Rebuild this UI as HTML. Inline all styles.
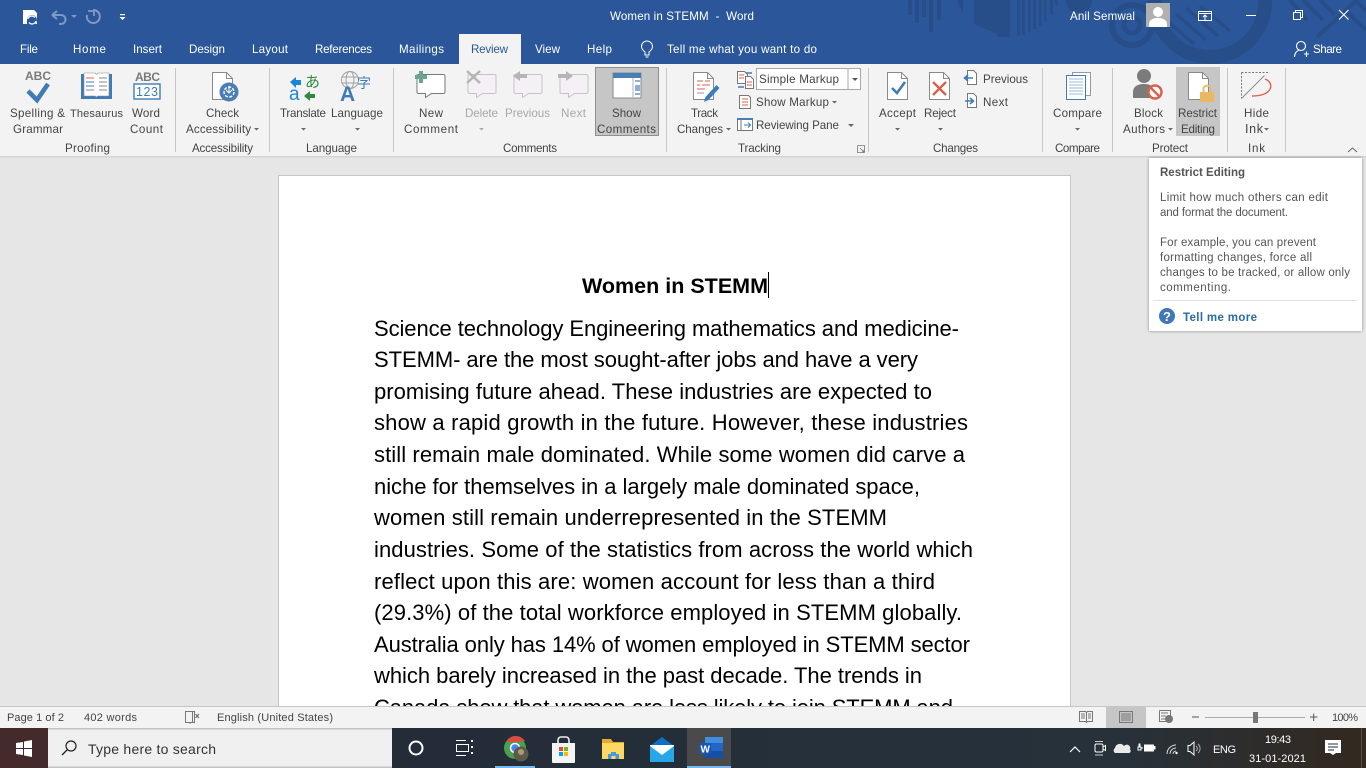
<!DOCTYPE html>
<html><head><meta charset="utf-8"><title>Women in STEMM - Word</title>
<style>
html,body{margin:0;padding:0;width:1366px;height:768px;overflow:hidden;background:#e6e6e6}
svg{display:block}
text{font-family:"Liberation Sans",sans-serif;font-size:11.6px;fill:#444}
.t{fill:#fff}
.d{fill:#a8a8a8}
.b{font-size:22px;fill:#000}
.s{font-size:11px;fill:#444}
.tip{font-size:11.500px;fill:#555}
</style></head><body>
<svg width="1366" height="768" viewBox="0 0 1366 768" xmlns="http://www.w3.org/2000/svg">
<defs>
<linearGradient id="tb" x1="0" x2="1" y1="0" y2="0"><stop offset="0" stop-color="#452a2b"/><stop offset=".05" stop-color="#3c2a2e"/><stop offset=".3" stop-color="#232c38"/><stop offset=".62" stop-color="#25303a"/><stop offset=".82" stop-color="#27313a"/><stop offset="1" stop-color="#33291f"/></linearGradient>
<clipPath id="hd"><rect x="0" y="0" width="1366" height="64"/></clipPath>
<clipPath id="bd"><rect x="279" y="176" width="791" height="530"/></clipPath>
<filter id="sh" x="-10%" y="-10%" width="120%" height="120%"><feDropShadow dx="0" dy="0" stdDeviation="1.6" flood-color="#000" flood-opacity=".4"/></filter>
</defs>
<rect width="1366" height="768" fill="#e6e6e6"/>
<!-- title bar -->
<rect width="1366" height="64" fill="#2b579a"/>
<g clip-path="url(#hd)" fill="#284e8a">
<rect x="908" y="0" width="4" height="15"/><rect x="915" y="0" width="4" height="23"/><rect x="922" y="0" width="4" height="17"/><rect x="929" y="0" width="4" height="32"/><rect x="937" y="0" width="4" height="20"/>
<path d="M957 0h6v15z"/><path d="M974 0h23v34l-23-10z"/><rect x="997" y="0" width="13" height="37"/>
<rect x="1017" y="0" width="3" height="36"/><rect x="1022" y="0" width="3" height="35"/><rect x="1028" y="0" width="2.500" height="32"/><rect x="1033" y="0" width="3" height="29"/><rect x="1039" y="0" width="2.500" height="26"/><rect x="1044" y="0" width="2.500" height="22"/><rect x="1050" y="0" width="3" height="14"/><rect x="1055" y="0" width="3" height="5"/>
<circle cx="1079" cy="0" r="13.500"/>
<circle cx="1132" cy="25" r="20" fill="none" stroke="#284e8a" stroke-width="6"/><circle cx="1132" cy="25" r="8" fill="none" stroke="#284e8a" stroke-width="5"/>
<circle cx="1210" cy="2" r="55" fill="none" stroke="#284e8a" stroke-width="14"/>
<path d="M1166 20l28 24M1176 14l30 26M1186 8l32 28M1200 6l30 25" stroke="#284e8a" stroke-width="3.500" fill="none"/>
<path d="M1290 0l17 20M1303 0l20 20M1320 0l15 15M1345 10l21 20M1355 0l11 11M1357 0l-40 37" stroke="#284e8a" stroke-width="4" fill="none"/>
</g>
<!-- QAT -->
<path d="M23 10h11l3 3v11h-7v-5h-3v5h-4z" fill="#fff"/><circle cx="32" cy="20" r="5" fill="#2b579a"/><path d="M28 19a4 4 0 0 1 7-1.500M36 21a4 4 0 0 1-7 1.500" fill="none" stroke="#fff" stroke-width="1.200"/>
<path d="M52 15l5-4M52 15l5 4M52 15h9a4 4 0 0 1 0 9h-2" fill="none" stroke="#7f9ac4" stroke-width="2"/><path d="M71 15h6l-3 3z" fill="#7f9ac4"/>
<path d="M93 10a6.500 6.500 0 1 1-6 5" fill="none" stroke="#7f9ac4" stroke-width="2"/><path d="M88 11h6v5" fill="none" stroke="#7f9ac4" stroke-width="1.800"/>
<rect x="120" y="14" width="5" height="1.200" fill="#fff"/><path d="M119.500 17h6l-3 3z" fill="#fff"/>
<text class="t" x="610" y="20" textLength="144" lengthAdjust="spacing" xml:space="preserve">Women in STEMM  -  Word</text>
<text class="t" x="1070" y="20" textLength="65" lengthAdjust="spacing">Anil Semwal</text>
<rect x="1146" y="3" width="24" height="24" fill="#b0b0b0"/><circle cx="1158" cy="12" r="5" fill="#fff"/><path d="M1149 27v-3c0-4 4-6 9-6s9 2 9 6v3z" fill="#fff"/>
<path d="M1198.500 11.500h13v9h-13zM1198.500 13.500h13M1205 20v-5M1203 17l2-2 2 2" fill="none" stroke="#fff"/>
<rect x="1246" y="15" width="10" height="1" fill="#fff"/>
<path d="M1293.500 12.500h7v7h-7zM1295.500 12.500v-2h7v7h-2" fill="none" stroke="#fff"/>
<path d="M1339 10l9.500 9.500M1348.500 10l-9.500 9.500" stroke="#fff" fill="none" stroke-width="1.100"/>
<!-- tabs -->
<rect x="459" y="34" width="62" height="30" fill="#f3f3f3"/>
<g class="tabs">
<text class="t" x="20" y="53" textLength="18" lengthAdjust="spacing">File</text>
<text class="t" x="73" y="53" textLength="33" lengthAdjust="spacing">Home</text>
<text class="t" x="133" y="53" textLength="29" lengthAdjust="spacing">Insert</text>
<text class="t" x="189" y="53" textLength="36" lengthAdjust="spacing">Design</text>
<text class="t" x="252" y="53" textLength="36" lengthAdjust="spacing">Layout</text>
<text class="t" x="315" y="53" textLength="57" lengthAdjust="spacing">References</text>
<text class="t" x="399" y="53" textLength="45" lengthAdjust="spacing">Mailings</text>
<text x="471" y="53" textLength="37" lengthAdjust="spacing" style="fill:#2b579a">Review</text>
<text class="t" x="535" y="53" textLength="25" lengthAdjust="spacing">View</text>
<text class="t" x="587" y="53" textLength="25" lengthAdjust="spacing">Help</text>
<text class="t" x="667" y="53" textLength="150" lengthAdjust="spacing">Tell me what you want to do</text>
<text class="t" x="1313" y="53" textLength="29" lengthAdjust="spacing">Share</text>
</g>
<path d="M645 55v-3c-2-1.500-3.500-3-3.500-5.500a5.500 5.500 0 0 1 11 0c0 2.500-1.500 4-3.500 5.500v3zM645.500 57h3" fill="none" stroke="#fff" stroke-width="1"/>
<circle cx="1301" cy="46" r="4.500" fill="none" stroke="#fff" stroke-width="1.100"/><path d="M1294.500 57c0-4 2.500-6.500 5-7M1304 54h5M1306.500 51.500v5.500" fill="none" stroke="#fff" stroke-width="1.100"/>
<!-- ribbon -->
<rect y="64" width="1366" height="92" fill="#f3f3f3"/>
<rect y="156" width="1366" height="1.500" fill="#d4d4d4"/>
<g fill="#c6c6c6">
<rect x="175" y="68" width="1" height="84"/><rect x="269" y="68" width="1" height="84"/><rect x="393" y="68" width="1" height="84"/><rect x="666" y="68" width="1" height="84"/><rect x="868" y="68" width="1" height="84"/><rect x="1042" y="68" width="1" height="84"/><rect x="1112" y="68" width="1" height="84"/><rect x="1227" y="68" width="1" height="84"/><rect x="1285" y="68" width="1" height="84"/>
</g>
<rect x="595.500" y="67.500" width="63" height="68" fill="#c6c6c6" stroke="#8f8f8f"/>
<rect x="1176" y="67" width="44" height="69" fill="#c6c6c6"/>
<!-- Proofing -->
<text x="25" y="80" textLength="26" lengthAdjust="spacing" style="font-weight:bold;font-size:12px;fill:#7a7a7a">ABC</text>
<path d="M28 91l9 9 11-16" fill="none" stroke="#3e7cb8" stroke-width="4.600"/>
<rect x="81" y="74" width="31" height="25" fill="#3e7cb8"/><path d="M84 73h11l1.500 1.500 1.500-1.500h11v23h-11l-1.500 1-1.500-1h-11z" fill="#fff" stroke="#8a8a8a" stroke-width=".6"/>
<path d="M86 78h8" stroke="#d9614c"/><path d="M86 82h8M86 86h8" stroke="#3e7cb8"/><path d="M86 90h8" stroke="#888"/>
<path d="M99 78h8M99 82h8M99 86h8M99 90h8" stroke="#888"/>
<text x="135" y="81" textLength="25" lengthAdjust="spacing" style="font-weight:bold;font-size:12px;fill:#7a7a7a">ABC</text>
<rect x="134" y="84" width="26" height="15" fill="#fff" stroke="#3e7cb8" stroke-width="1.400"/>
<text x="136" y="96" textLength="22" lengthAdjust="spacing" style="font-size:12.500px;fill:#3e7cb8">123</text>
<text x="10" y="117" textLength="55" lengthAdjust="spacing">Spelling &amp;</text>
<text x="13" y="133" textLength="50" lengthAdjust="spacing">Grammar</text>
<text x="70" y="117" textLength="53" lengthAdjust="spacing" style="font-size:11px">Thesaurus</text>
<text x="132" y="117" textLength="28" lengthAdjust="spacing">Word</text>
<text x="130" y="133" textLength="33" lengthAdjust="spacing">Count</text>
<text x="65" y="152" textLength="45" lengthAdjust="spacing">Proofing</text>
<!-- Accessibility -->
<path d="M212.500 72.500h14l6 6v21h-20z" fill="#fff" stroke="#8a8a8a"/><path d="M226.500 72.500v6h6" fill="none" stroke="#8a8a8a"/>
<circle cx="229" cy="92" r="9.500" fill="#4a7fb5"/><circle cx="229" cy="92" r="5" fill="none" stroke="#fff" stroke-dasharray="3 1.500" stroke-width="1.400"/><path d="M229 86v6M226 90l3 3 3-3" stroke="#fff" fill="none"/>
<text x="206" y="117" textLength="33" lengthAdjust="spacing">Check</text>
<text x="186" y="133" textLength="65" lengthAdjust="spacing">Accessibility</text>
<path d="M254 128h5l-2.500 2.500z" fill="#666"/>
<text x="192" y="152" textLength="61" lengthAdjust="spacing">Accessibility</text>
<!-- Language -->
<path d="M290 82l6-5v3h5v5h-5v3z" fill="#1a86d8"/>
<text x="305" y="87" style="font-size:15px;fill:#2d8a3e;font-family:'Noto Sans CJK JP',sans-serif">あ</text>
<text x="289" y="100" style="font-size:19px;fill:#1a86d8">a</text>
<path d="M304 96l6-5v3h5v4h-5v3z" fill="#2d8a3e"/>
<circle cx="350" cy="80" r="8.500" fill="none" stroke="#a0a0a0"/><ellipse cx="350" cy="80" rx="4" ry="8.500" fill="none" stroke="#a0a0a0"/><path d="M342 77h16M342 83h16" stroke="#a0a0a0"/>
<text x="340" y="101" style="font-size:21px;font-weight:bold;fill:#3e7cb8">A</text>
<text x="357" y="88" style="font-size:14px;fill:#3e7cb8;font-family:'Noto Sans CJK JP',sans-serif">字</text>
<text x="280" y="117" textLength="46" lengthAdjust="spacing">Translate</text>
<path d="M301 128h5l-2.500 2.500z" fill="#666"/>
<text x="331" y="117" textLength="52" lengthAdjust="spacing">Language</text>
<path d="M355 128h5l-2.500 2.500z" fill="#666"/>
<text x="306" y="152" textLength="51" lengthAdjust="spacing">Language</text>
<!-- Comments -->
<path d="M418.500 74.500h25a1.500 1.500 0 0 1 1.500 1.500v16a1.500 1.500 0 0 1-1.500 1.500h-12l-6 4v-4h-7a1.500 1.500 0 0 1-1.500-1.500v-17z" fill="#fff" stroke="#777"/>
<path d="M419 71h4v4h4v4h-4v4h-4v-4h-4v-4h4z" fill="#6aa590"/>
<path d="M469.500 74.500h25a1.500 1.500 0 0 1 1.500 1.500v16a1.500 1.500 0 0 1-1.500 1.500h-12l-6 4v-4h-7a1.500 1.500 0 0 1-1.500-1.500v-17z" fill="#f5f0f5" stroke="#c4c4c4"/>
<path d="M467 71l13 12M480 71l-13 12" stroke="#b5b5b5" stroke-width="2.400"/>
<path d="M515.500 74.500h25a1.500 1.500 0 0 1 1.500 1.500v16a1.500 1.500 0 0 1-1.500 1.500h-12l-6 4v-4h-7a1.500 1.500 0 0 1-1.500-1.500v-17z" fill="#f5f0f5" stroke="#c4c4c4"/>
<path d="M513 76l7-5v3h7v4h-7v3z" fill="#b5b5b5"/>
<path d="M561.500 74.500h25a1.500 1.500 0 0 1 1.500 1.500v16a1.500 1.500 0 0 1-1.500 1.500h-12l-6 4v-4h-7a1.500 1.500 0 0 1-1.500-1.500v-17z" fill="#f5f0f5" stroke="#c4c4c4"/>
<path d="M573 76l-7-5v3h-8v4h8v3z" fill="#b5b5b5"/>
<rect x="613" y="73" width="28" height="25" fill="#fff" stroke="#8a8a8a"/><rect x="613" y="73" width="28" height="5" fill="#4a7fb5"/><path d="M633 78v19" stroke="#b0b0b0"/><path d="M635 81h5M635 86h5M635 88h5M635 90h5M635 94h5" stroke="#4a7fb5" stroke-width="1.200"/>
<text x="419" y="117" textLength="24" lengthAdjust="spacing">New</text>
<text x="404" y="133" textLength="54" lengthAdjust="spacing">Comment</text>
<text class="d" x="465" y="117" textLength="33" lengthAdjust="spacing">Delete</text>
<path d="M479 128h5l-2.500 2.500z" fill="#aaa"/>
<text class="d" x="505" y="117" textLength="45" lengthAdjust="spacing">Previous</text>
<text class="d" x="561" y="117" textLength="25" lengthAdjust="spacing">Next</text>
<text x="612" y="117" textLength="29" lengthAdjust="spacing">Show</text>
<text x="597" y="133" textLength="59" lengthAdjust="spacing">Comments</text>
<text x="503" y="152" textLength="54" lengthAdjust="spacing">Comments</text>
<!-- Tracking -->
<path d="M693.500 72.500h14l6 6v21h-20z" fill="#fff" stroke="#8a8a8a"/><path d="M707.500 72.500v6h6" fill="none" stroke="#8a8a8a"/>
<path d="M697 81h6M705 81h5M697 85h3M702 85h8M697 89h8" stroke="#d9614c"/><path d="M697 93h7" stroke="#999"/>
<path d="M704 102l1.500-5 11-12 3 3-11 12z" fill="#3e7cb8"/>
<path d="M737.500 71.500h7l3 3v9h-10z" fill="#fff" stroke="#777"/><path d="M745.500 76.500h5l3 3v9h-8z" fill="#fff" stroke="#777"/><path d="M739 75h5M739 78h5M747 82h5M747 85h5" stroke="#d9614c"/><path d="M746 73h6M738 87h6" stroke="#3e7cb8" stroke-width="1.400"/>
<rect x="756.500" y="68.500" width="104" height="21" fill="#fff" stroke="#a8a8a8"/><path d="M848 69v20" stroke="#a8a8a8"/><path d="M852 78h6l-3 3z" fill="#555"/>
<text x="759" y="83" textLength="80" lengthAdjust="spacing">Simple Markup</text>
<path d="M739.500 95.500h9l2 2v11h-11z" fill="#fff" stroke="#777"/><path d="M742 99h6M742 102h6M742 105h6" stroke="#d9614c"/>
<text x="756" y="106" textLength="73" lengthAdjust="spacing">Show Markup</text><path d="M832 101h5l-2.500 2.500z" fill="#666"/>
<rect x="737.500" y="118.500" width="15" height="12" fill="#fff" stroke="#777"/><rect x="737" y="118" width="16" height="2" fill="#4a7fb5"/><path d="M741 120v10" stroke="#777"/><path d="M744 125h6M748 122.500l2.500 2.500-2.500 2.500" stroke="#3e7cb8" fill="none"/>
<text x="756" y="129" textLength="83" lengthAdjust="spacing">Reviewing Pane</text><path d="M848 124h6l-3 3z" fill="#666"/>
<text x="691" y="117" textLength="27" lengthAdjust="spacing">Track</text>
<text x="677" y="133" textLength="46" lengthAdjust="spacing">Changes</text><path d="M726 128h5l-2.500 2.500z" fill="#666"/>
<text x="738" y="152" textLength="43" lengthAdjust="spacing">Tracking</text>
<path d="M857.500 145.500h7v7M857.500 145.500v7h7M860 148l4 4M864 150v2h-2" fill="none" stroke="#777" stroke-width=".8"/>
<!-- Changes -->
<path d="M887.500 72.500h14l6 6v21h-20z" fill="#fff" stroke="#8a8a8a"/><path d="M901.500 72.500v6h6" fill="none" stroke="#8a8a8a"/><path d="M892 88l5 5 8-11" fill="none" stroke="#3e7cb8" stroke-width="2.600"/>
<path d="M929.500 72.500h14l6 6v21h-20z" fill="#fff" stroke="#8a8a8a"/><path d="M943.500 72.500v6h6" fill="none" stroke="#8a8a8a"/><path d="M933 82l13 13M946 82l-13 13" stroke="#d9614c" stroke-width="2.400"/>
<path d="M967.500 70.500h6l3 3v11h-9z" fill="#fff" stroke="#777"/><path d="M965 78h8M968 75l-3.500 3 3.500 3" stroke="#3e7cb8" stroke-width="1.600" fill="none"/>
<path d="M967.500 93.500h6l3 3v11h-9z" fill="#fff" stroke="#777"/><path d="M965 101h8M970 98l3.500 3-3.500 3" stroke="#3e7cb8" stroke-width="1.600" fill="none"/>
<text x="983" y="83" textLength="45" lengthAdjust="spacing">Previous</text>
<text x="983" y="106" textLength="25" lengthAdjust="spacing">Next</text>
<text x="879" y="117" textLength="37" lengthAdjust="spacing">Accept</text><path d="M895 128h5l-2.500 2.500z" fill="#666"/>
<text x="924" y="117" textLength="32" lengthAdjust="spacing">Reject</text><path d="M938 128h5l-2.500 2.500z" fill="#666"/>
<text x="933" y="152" textLength="45" lengthAdjust="spacing">Changes</text>
<!-- Compare -->
<rect x="1072.500" y="72.500" width="18" height="23" fill="#fff" stroke="#999"/>
<rect x="1066.500" y="75.500" width="19" height="24" fill="#fff" stroke="#3e7cb8"/>
<path d="M1069 79h14M1069 82h14M1069 85h14M1069 88h14M1069 91h14M1069 94h14" stroke="#9dbbd8"/>
<text x="1053" y="117" textLength="49" lengthAdjust="spacing">Compare</text><path d="M1075 128h5l-2.500 2.500z" fill="#666"/>
<text x="1055" y="152" textLength="45" lengthAdjust="spacing">Compare</text>
<!-- Protect -->
<circle cx="1144" cy="76" r="7" fill="#7b7b7b"/><path d="M1133 98v-6c0-5 4-8 11-8s11 3 11 8v6z" fill="#7b7b7b"/>
<circle cx="1155" cy="92" r="6.500" fill="#fff" stroke="#d9614c" stroke-width="2.400"/><path d="M1151 88l8 8" stroke="#d9614c" stroke-width="2.400"/>
<path d="M1188.500 72.500h14l6 6v21h-20z" fill="#fff" stroke="#8a8a8a"/><path d="M1202.500 72.500v6h6" fill="none" stroke="#8a8a8a"/>
<rect x="1200" y="92" width="14" height="10" fill="#eab765"/><path d="M1203.500 92v-3a3.500 3.500 0 0 1 7 0v3" fill="none" stroke="#eab765" stroke-width="1.800"/>
<text x="1134" y="117" textLength="29" lengthAdjust="spacing">Block</text>
<text x="1123" y="133" textLength="42" lengthAdjust="spacing">Authors</text><path d="M1168 128h5l-2.500 2.500z" fill="#666"/>
<text x="1178" y="117" textLength="39" lengthAdjust="spacing">Restrict</text>
<text x="1181" y="133" textLength="34" lengthAdjust="spacing">Editing</text>
<text x="1152" y="152" textLength="36" lengthAdjust="spacing">Protect</text>
<!-- Ink -->
<path d="M1241.500 72.500h28M1241.500 72.500v26" stroke="#777" fill="none" stroke-dasharray="2 1.500"/><path d="M1241.500 98.500l23-23" stroke="#8a8a8a"/>
<path d="M1265 79c5 2 7 6 5 10-2 5-10 7-18 7" fill="none" stroke="#d9614c" stroke-width="1.400"/>
<text x="1244" y="117" textLength="25" lengthAdjust="spacing">Hide</text>
<text x="1245" y="133" textLength="18" lengthAdjust="spacing" style="font-size:12.500px">Ink</text><path d="M1264 128h5l-2.500 2.500z" fill="#666"/>
<text x="1248" y="152" textLength="17" lengthAdjust="spacing">Ink</text>
<path d="M1348 152l4.500-4 4.500 4" fill="none" stroke="#666"/>
<!-- page -->
<rect x="278.500" y="175.500" width="792" height="540" fill="#fff" stroke="#c6c6c6"/>
<text x="582" y="293" textLength="186" lengthAdjust="spacing" style="font-size:21.500px;font-weight:bold;fill:#000">Women in STEMM</text>
<rect x="768" y="272" width="1" height="26" fill="#000"/>
<g clip-path="url(#bd)">
<text class="b" x="374" y="336" textLength="585" lengthAdjust="spacing">Science technology Engineering mathematics and medicine-</text>
<text class="b" x="374" y="367" textLength="544" lengthAdjust="spacing">STEMM- are the most sought-after jobs and have a very</text>
<text class="b" x="374" y="399" textLength="558" lengthAdjust="spacing">promising future ahead. These industries are expected to</text>
<text class="b" x="374" y="430" textLength="594" lengthAdjust="spacing">show a rapid growth in the future. However, these industries</text>
<text class="b" x="374" y="462" textLength="591" lengthAdjust="spacing">still remain male dominated. While some women did carve a</text>
<text class="b" x="374" y="494" textLength="546" lengthAdjust="spacing">niche for themselves in a largely male dominated space,</text>
<text class="b" x="374" y="525" textLength="513" lengthAdjust="spacing">women still remain underrepresented in the STEMM</text>
<text class="b" x="374" y="557" textLength="599" lengthAdjust="spacing">industries. Some of the statistics from across the world which</text>
<text class="b" x="374" y="589" textLength="561" lengthAdjust="spacing">reflect upon this are: women account for less than a third</text>
<text class="b" x="374" y="620" textLength="588" lengthAdjust="spacing">(29.3%) of the total workforce employed in STEMM globally.</text>
<text class="b" x="374" y="652" textLength="596" lengthAdjust="spacing">Australia only has 14% of women employed in STEMM sector</text>
<text class="b" x="374" y="683" textLength="548" lengthAdjust="spacing">which barely increased in the past decade. The trends in</text>
<text class="b" x="374" y="715" textLength="579" lengthAdjust="spacing">Canada show that women are less likely to join STEMM and</text>
</g>
<!-- tooltip -->
<rect x="1149" y="158" width="213" height="173" fill="#fff" filter="url(#sh)"/>
<text x="1160" y="176" textLength="85" lengthAdjust="spacing" style="font-weight:bold;font-size:11.500px;fill:#555">Restrict Editing</text>
<text class="tip" x="1160" y="201" textLength="168" lengthAdjust="spacing">Limit how much others can edit</text>
<text class="tip" x="1160" y="216" textLength="128" lengthAdjust="spacing">and format the document.</text>
<text class="tip" x="1160" y="246" textLength="156" lengthAdjust="spacing">For example, you can prevent</text>
<text class="tip" x="1160" y="261" textLength="152" lengthAdjust="spacing">formatting changes, force all</text>
<text class="tip" x="1160" y="276" textLength="190" lengthAdjust="spacing">changes to be tracked, or allow only</text>
<text class="tip" x="1160" y="291" textLength="71" lengthAdjust="spacing">commenting.</text>
<rect x="1153" y="300" width="204" height="1" fill="#e2e2e2"/>
<circle cx="1167" cy="316" r="8" fill="#3f78b4"/>
<text x="1163" y="321" style="font-size:13px;font-weight:bold;fill:#fff">?</text>
<text x="1183" y="321" textLength="74" lengthAdjust="spacing" style="font-weight:bold;font-size:11.500px;fill:#2b6aa8">Tell me more</text>
<!-- status -->
<rect y="707" width="1366" height="21" fill="#f3f3f3"/>
<rect y="706" width="1366" height="1" fill="#c6c6c6"/>
<text class="s" x="7" y="721" textLength="57" lengthAdjust="spacing">Page 1 of 2</text>
<text class="s" x="84" y="721" textLength="53" lengthAdjust="spacing">402 words</text>
<path d="M185.500 711.500h7v11h-7zM192.500 711.500h2v11h-2M190 722v2" fill="none" stroke="#777"/><path d="M195.500 714l3.500 4M199 714l-3.500 4" stroke="#666" fill="none"/>
<text class="s" x="217" y="721" textLength="116" lengthAdjust="spacing">English (United States)</text>
<rect x="1106" y="707" width="40" height="21" fill="#c6c6c6"/>
<path d="M1079.500 711.500h6l1 1 1-1h5v10h-5l-1 1-1-1h-6zM1086.500 712.500v9M1081 714h4M1081 716h4M1081 718h4M1088 714h3M1088 716h3M1088 718h3" fill="none" stroke="#777"/>
<rect x="1119.500" y="711.500" width="13" height="11" fill="none" stroke="#777"/><path d="M1121 714h10M1121 716h10M1121 718h10M1121 720h10" stroke="#777"/>
<path d="M1159.500 710.500h11v8M1159.500 710.500v11h7M1161 713h7M1161 716h5M1161 719h4" fill="none" stroke="#777"/><circle cx="1169" cy="719" r="4" fill="#777"/>
<rect x="1192" y="716.500" width="7" height="1" fill="#555"/>
<rect x="1205" y="717" width="100" height="1" fill="#aaa"/>
<rect x="1253" y="712" width="5" height="11" fill="#777"/>
<path d="M1310 717h7.500M1313.700 713.500v7.500" stroke="#555" fill="none"/>
<text class="s" x="1332" y="721" textLength="26" lengthAdjust="spacing">100%</text>
<!-- taskbar -->
<rect y="728" width="1366" height="40" fill="url(#tb)"/>
<rect x="0" y="728" width="48" height="40" fill="#452a2b"/>
<path d="M16 743l7-1v6h-7zM24 741.500l8-1.500v8h-8zM16 749h7v6l-7-1zM24 749h8v8l-8-1.500z" fill="#fff"/>
<rect x="48" y="729" width="344" height="39" fill="#f0f0f0"/>
<rect x="48" y="728" width="344" height="1.500" fill="#c4c4c4"/>
<rect x="48" y="766.500" width="344" height="1.500" fill="#c4c4c4"/>
<circle cx="71" cy="746" r="5" fill="none" stroke="#222" stroke-width="1.200"/><path d="M67 750l-5 5" stroke="#222" stroke-width="1.300"/>
<text x="88" y="754" textLength="128" lengthAdjust="spacing" style="font-size:14px;fill:#333">Type here to search</text>
<circle cx="416" cy="748" r="6.500" fill="none" stroke="#fff" stroke-width="2"/>
<path d="M456 740.500h10M456 755.500h10" stroke="#fff" fill="none"/><rect x="456.500" y="744.500" width="12" height="7" fill="none" stroke="#fff"/><path d="M471 741h2M471 747h2M471 753h2" stroke="#fff" stroke-width="2" stroke-dasharray="2 2"/>
<circle cx="515" cy="748" r="11" fill="#4aa04f"/><path d="M506 742a11 11 0 0 1 19-1l-9 1z" fill="#dd4b3e"/><path d="M526 748a11 11 0 0 1-8 10.500l5-9z" fill="#f2c031"/><circle cx="515" cy="748" r="4.500" fill="#4b85ee" stroke="#fff" stroke-width="1.500"/>
<circle cx="521" cy="754" r="7.500" fill="#5c5a4a"/><circle cx="521" cy="752" r="3" fill="#b09a70"/>
<path d="M552 743h23v19a1 1 0 0 1-1 1h-21a1 1 0 0 1-1-1z" fill="#f4f4f4"/><path d="M558 743v-3a3 3 0 0 1 3-3h5a3 3 0 0 1 3 3v3" fill="none" stroke="#eee" stroke-width="1.600"/>
<rect x="559" y="747" width="4" height="4" fill="#e2512d"/><rect x="564" y="747" width="4" height="4" fill="#7db900"/><rect x="559" y="752" width="4" height="4" fill="#00a4ef"/><rect x="564" y="752" width="4" height="4" fill="#ffb900"/>
<path d="M602 739h9l2 3h11v17h-22z" fill="#e5ac2c"/><rect x="602" y="743" width="22" height="16" fill="#fdd864"/><path d="M608 759v-5h3v-2h5v2h3v5h-3.500v-3h-4v3z" fill="#4a98dc"/>
<path d="M650 746l12-9 12 9v16h-24z" fill="#0a70c8"/><rect x="650" y="746" width="24" height="16" fill="#27a6e8"/><path d="M650 746l12 9 12-9v-1h-24z" fill="#fff"/>
<rect x="687" y="728" width="44" height="38" fill="#4a4a4c"/>
<rect x="705" y="737" width="18" height="21" rx="1" fill="#2265c4"/><rect x="705" y="737" width="18" height="6" fill="#3f8fe0"/><rect x="705" y="751" width="18" height="7" fill="#174ea6"/>
<rect x="699" y="743" width="12" height="11" fill="#1a56b0"/>
<text x="700.500" y="752.500" style="font-size:10px;font-weight:bold;fill:#fff">W</text>
<rect x="495" y="766" width="40" height="2" fill="#76b9ed"/>
<rect x="687" y="766" width="44" height="2" fill="#76b9ed"/>
<!-- tray -->
<path d="M1070 752l5-5 5 5" fill="none" stroke="#fff" stroke-width="1.200"/>
<rect x="1095" y="744" width="8" height="8" rx="1.500" fill="none" stroke="#fff"/><path d="M1103 747l2.500-1.500v5l-2.500-1.500" fill="none" stroke="#fff"/><path d="M1095 741.500h8M1095 755h8" stroke="#ccc"/>
<path d="M1115 753a3 3 0 0 1 0-5 5 5 0 0 1 9-2 3.500 3.500 0 0 1 6 3.500 2 2 0 0 1-1 3.500z" fill="#e9e9e9"/>
<path d="M1139 744v3h-1v3h3v-3h-1v-3zM1141 748h2" fill="none" stroke="#fff"/><rect x="1144" y="744.500" width="10" height="7" fill="#fff"/><rect x="1154" y="746" width="1.500" height="3.500" fill="#fff"/>
<path d="M1167 754a9 9 0 0 1 9-9M1170 754a6 6 0 0 1 6-6M1173 754a3 3 0 0 1 3-3" fill="none" stroke="#ddd"/><circle cx="1176.500" cy="753" r="1.200" fill="#fff"/>
<path d="M1188 745.500v6h2l4 3.500v-13l-4 3.500z" fill="none" stroke="#fff"/><path d="M1196 746a3 3 0 0 1 0 5M1198 744a6 6 0 0 1 0 9" stroke="#aaa" fill="none"/>
<text class="t" x="1213" y="753" textLength="23" lengthAdjust="spacing" style="font-size:11px">ENG</text>
<text class="t" x="1265" y="743" textLength="26" lengthAdjust="spacing" style="font-size:11px">19:43</text>
<text class="t" x="1249" y="762" textLength="57" lengthAdjust="spacing" style="font-size:11px">31-01-2021</text>
<path d="M1325 740h16v13h-5l-3 2-3-2h-5z" fill="#fff"/><path d="M1328 744h10M1328 747h10M1328 750h6" stroke="#2a2f33"/>
<rect x="1361" y="728" width="1" height="40" fill="#55504a"/>
</svg>
</body></html>
